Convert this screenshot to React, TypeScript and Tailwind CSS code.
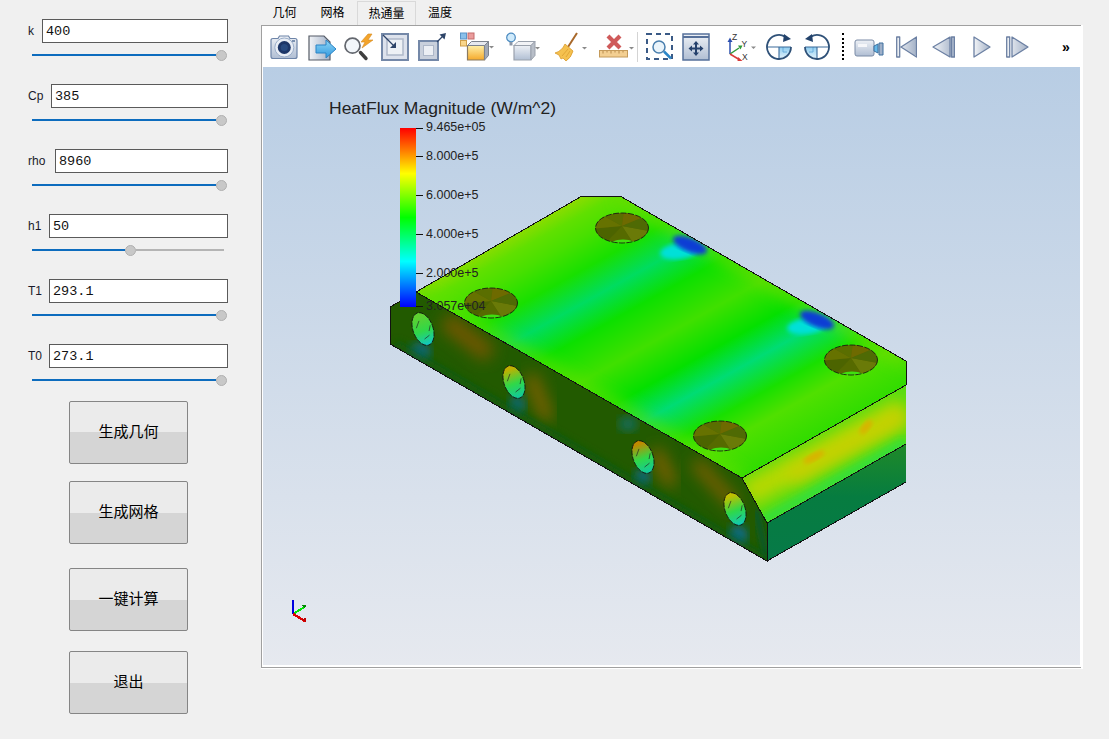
const sans = "font-['Liberation_Sans','Noto_Sans_CJK_SC',sans-serif]";

function Slider({ fill, rest }: { fill: string; rest?: string }) {
  return (
    <div className="mt-[7px] ml-[4px] flex h-[11px] items-start">
      <div className={`mt-[4px] h-[2px] bg-[#0d6cbe] ${fill}`} />
      <div className="h-[11px] w-[11px] shrink-0 rounded-full border border-[#b0b0b0] bg-[#c8c8c8]" />
      {rest && <div className={`mt-[4px] h-[2px] bg-[#b4b4b4] ${rest}`} />}
    </div>
  );
}

function Param({ label, value, inputWidth, fill = "w-[184px]", rest }: { label: string; value: string; inputWidth: string; fill?: string; rest?: string }) {
  return (
    <div className="h-[42px]">
      <div className="flex h-[24px] items-center justify-between">
        <span className="text-[12px] leading-none text-[#1a1a2a]">{label}</span>
        <div className={`flex h-[24px] items-center border border-[#5a5a5a] bg-white pt-[2px] pl-[3px] font-['Liberation_Mono',monospace] text-[13.5px] text-[#111] ${inputWidth}`}>
          {value}
        </div>
      </div>
      <Slider fill={fill} rest={rest} />
    </div>
  );
}

function ActionButton({ label, margin }: { label: string; margin: string }) {
  return (
    <div className={`ml-[41px] flex h-[63px] w-[119px] items-center justify-center rounded-[2px] border border-[#858585] bg-[linear-gradient(#ebebeb_50%,#d5d5d5_50%)] text-[15px] text-black ${margin}`}>
      {label}
    </div>
  );
}

function Caret({ x, y }: { x: number; y: number }) {
  return <path d={`M${x} ${y}h5l-2.5 2.5z`} fill="#8a8a8a" />;
}

function CameraIcon() {
  return (
    <svg width="28" height="30" viewBox="0 0 28 30">
      <defs>
        <linearGradient id="steel" x1="0" y1="0" x2="0" y2="1">
          <stop offset="0" stopColor="#eef1f6" />
          <stop offset="1" stopColor="#b0bed3" />
        </linearGradient>
        <linearGradient id="steelH" x1="0" y1="0" x2="1" y2="0">
          <stop offset="0" stopColor="#f2f4f7" />
          <stop offset="1" stopColor="#a3b1c7" />
        </linearGradient>
        <linearGradient id="gold" x1="0" y1="0" x2="0" y2="1">
          <stop offset="0" stopColor="#fff0a8" />
          <stop offset="1" stopColor="#f5a92a" />
        </linearGradient>
        <linearGradient id="sky" x1="0" y1="0" x2="0" y2="1">
          <stop offset="0" stopColor="#8fd6f5" />
          <stop offset="1" stopColor="#2f97df" />
        </linearGradient>
        <linearGradient id="quad" x1="0" y1="0" x2="0" y2="1">
          <stop offset="0" stopColor="#8fcdf0" />
          <stop offset="1" stopColor="#e4f3fc" />
        </linearGradient>
      </defs>
      <path d="M1 8.5q0-2 2-2h5l1.5-2.5h9l1.5 2.5h5q2 0 2 2v16q0 2-2 2H3q-2 0-2-2z" fill="url(#steel)" stroke="#6d84a8" strokeWidth="1.2" />
      <circle cx="14.3" cy="15.5" r="9.5" fill="#e8edf5" stroke="#9aadc9" />
      <circle cx="14.3" cy="15.5" r="6.5" fill="#1c3567" />
      <circle cx="14.3" cy="15.5" r="3.6" fill="#27497f" />
      <rect x="22" y="8" width="3" height="2" fill="#7d92b1" />
    </svg>
  );
}

function ExportIcon() {
  return (
    <svg width="28" height="30" viewBox="0 0 28 30">
      <path d="M1 4h15l6 6v18H1z" fill="url(#steelH)" stroke="#555b66" strokeWidth="1.2" />
      <path d="M8 13h10V8l10 9-10 9v-5H8z" fill="url(#sky)" stroke="#2a84c6" />
    </svg>
  );
}

function SparkZoomIcon() {
  return (
    <svg width="30" height="30" viewBox="0 0 30 30">
      <path d="M24 2l-7 8h4l-3 6 11-8h-5l4-6z" fill="#f3a42c" stroke="#d58a20" strokeWidth="0.6" />
      <path d="M16.5 20.5l5.5 6" stroke="#3f3f3f" strokeWidth="3.4" strokeLinecap="round" />
      <circle cx="8.5" cy="13.7" r="7.5" fill="#f2f6fa" stroke="#63676e" strokeWidth="1.7" />
    </svg>
  );
}

function FitInIcon() {
  return (
    <svg width="28" height="30" viewBox="0 0 28 30">
      <rect x="1" y="2" width="26" height="26" fill="#dde2ec" stroke="#7488a8" strokeWidth="2" />
      <rect x="6" y="7" width="16" height="16" fill="#eef1f5" stroke="#aeb8c9" strokeWidth="1.5" />
      <path d="M2 3l11 11" stroke="#2e4468" strokeWidth="1.3" />
      <path d="M15 16v-6l-6 6z" fill="#2e4468" />
    </svg>
  );
}

function FitOutIcon() {
  return (
    <svg width="28" height="30" viewBox="0 0 28 30">
      <rect x="1" y="9" width="19" height="19" fill="#c9d0dc" stroke="#7488a8" strokeWidth="2" />
      <rect x="5.5" y="13.5" width="10" height="10" fill="#eceff4" stroke="#aeb8c9" />
      <path d="M19 10l6-6" stroke="#2e4468" strokeWidth="1.3" />
      <path d="M28 1l-6.5 1.5 5 5z" fill="#2e4468" />
    </svg>
  );
}

function ColorCubeIcon() {
  return (
    <svg width="34" height="30" viewBox="0 0 34 30">
      <rect x="0.5" y="1" width="6" height="6" fill="#8ac0ea" stroke="#5a94c8" />
      <rect x="8" y="1" width="6" height="6" fill="#ea9c9c" stroke="#c46a6a" />
      <rect x="0.5" y="8.5" width="6" height="5.5" fill="#f9d68a" stroke="#d0a04a" />
      <path d="M7.5 13.5h17v14.500h-17z" fill="url(#gold)" stroke="#8a7a60" strokeWidth="1.2" />
      <path d="M7.5 13.5l4-4h17l-4 4z" fill="#e6e9ef" stroke="#7c838e" strokeWidth="1" />
      <path d="M24.5 13.5l4-4v14l-4 4.500z" fill="#a0a8b6" stroke="#7c838e" strokeWidth="1" />
      <Caret x={29} y={14} />
    </svg>
  );
}

function BulbCubeIcon() {
  return (
    <svg width="34" height="30" viewBox="0 0 34 30">
      <circle cx="5" cy="5.5" r="4.3" fill="#cfeafb" stroke="#4a8ac0" strokeWidth="1.2" />
      <path d="M3.5 10h3v3.500h-3z" fill="#8a96a8" />
      <path d="M8 13.5h17v14.500h-17z" fill="url(#steel)" stroke="#9aa1ac" strokeWidth="1.2" />
      <path d="M8 13.5l4-4h17l-4 4z" fill="#f2f3f6" stroke="#9aa1ac" strokeWidth="1" />
      <path d="M25 13.5l4-4v14l-4 4.500z" fill="#b8bec8" stroke="#9aa1ac" strokeWidth="1" />
      <Caret x={29} y={15} />
    </svg>
  );
}

function BroomIcon() {
  return (
    <svg width="34" height="30" viewBox="0 0 34 30">
      <path d="M22 1L13 15" stroke="#a8682a" strokeWidth="2" />
      <path d="M10 12L18 19Q16 26 11 29L8 26L6 27L4 23L0 21Q7 19 10 12z" fill="#f5c14f" stroke="#d99a2c" strokeWidth="0.8" />
      <path d="M13 17l-6 7M15 19l-4 6" stroke="#d99a2c" strokeWidth="0.7" />
      <Caret x={27} y={15} />
    </svg>
  );
}

function RulerIcon() {
  return (
    <svg width="35" height="30" viewBox="0 0 35 30">
      <path d="M9 4L21 16M21 4L9 16" stroke="#cf5a5a" strokeWidth="4.2" />
      <rect x="0.5" y="18.5" width="28" height="6.5" fill="#f3cf92" stroke="#c49a5a" />
      <path d="M4 19v2.500M8 19v1.500M12 19v2.500M16 19v1.500M20 19v2.500M24 19v1.500" stroke="#a8793a" strokeWidth="0.8" />
      <Caret x={30} y={15} />
    </svg>
  );
}

function DashZoomIcon() {
  return (
    <svg width="28" height="30" viewBox="0 0 28 30">
      <rect x="1" y="2" width="25" height="25" fill="none" stroke="#3a5a86" strokeWidth="2" strokeDasharray="5 4" />
      <circle cx="13" cy="15" r="6" fill="#eaf4fb" stroke="#4a7fae" strokeWidth="1.5" />
      <path d="M18 19.5l7 7" stroke="#2b86c8" strokeWidth="2.5" />
    </svg>
  );
}

function MoveIcon() {
  return (
    <svg width="28" height="30" viewBox="0 0 28 30">
      <rect x="1" y="2" width="26" height="26" fill="url(#steel)" stroke="#56709a" strokeWidth="1.5" />
      <path d="M1 5h26" stroke="#56709a" strokeWidth="2" />
      <path d="M14 9l-3 3.500h2v3h-3v-2l-3.500 3 3.500 3v-2h3v3h-2l3 3.500 3-3.500h-2v-3h3v2l3.500-3-3.500-3v2h-3v-3h2z" fill="#24406c" />
    </svg>
  );
}

function AxesIcon() {
  return (
    <svg width="30" height="30" viewBox="0 0 30 30">
      <path d="M3 22V9" stroke="#2c4fb0" strokeWidth="1.5" />
      <path d="M0.5 10L3 5.5 5.5 10z" fill="#2c4fb0" />
      <path d="M3 22l9-6" stroke="#2f9a3a" strokeWidth="1.5" />
      <path d="M11 13.5l4.500 0-2 4z" fill="#2f9a3a" />
      <path d="M3 22l10 6" stroke="#d83a3a" strokeWidth="1.5" />
      <path d="M11 25l4.500 4-5 0z" fill="#d83a3a" />
      <text x="5" y="8" className={sans} fontSize="8.5" fill="#333">Z</text>
      <text x="14.5" y="15" className={sans} fontSize="8.5" fill="#333">Y</text>
      <text x="15" y="28" className={sans} fontSize="8.5" fill="#333">X</text>
      <Caret x={24} y={14.5} />
    </svg>
  );
}

function RotateIcon({ flip }: { flip?: boolean }) {
  return (
    <svg width="27" height="30" viewBox="0 0 27 30" className={flip ? "-scale-x-100" : ""}>
      <path d="M13 15h12a12 12 0 0 1-12 12z" fill="url(#quad)" />
      <path d="M17 15v5h4" fill="none" stroke="#5aa3d8" strokeWidth="0.8" />
      <path d="M1 15h24M13 15v12" fill="none" stroke="#3a6a9a" strokeWidth="1.1" />
      <path d="M25 15A12 12 0 1 1 19 4.600" fill="none" stroke="#2f5178" strokeWidth="1.8" />
      <path d="M18 2l7 5-8 3z" fill="#23426b" />
    </svg>
  );
}

function VideoIcon() {
  return (
    <svg width="30" height="30" viewBox="0 0 30 30">
      <rect x="1" y="8" width="19" height="16" rx="2" fill="url(#steel)" stroke="#7a8ba6" />
      <rect x="4" y="12" width="9" height="3" fill="#f6f7fa" />
      <path d="M20 14l4-2v9l-4-2z" fill="#66b8e8" stroke="#3d6f9e" />
      <path d="M25 11h4v12h-4z" fill="#9fb0c9" stroke="#3d6f9e" />
    </svg>
  );
}

function PlayIcon({ shape, width }: { shape: string; width: number }) {
  return (
    <svg width={width} height="30" viewBox={`0 0 ${width} 30`}>
      <path d={shape} fill="url(#steelH)" stroke="#6c80a3" strokeWidth="1.3" strokeLinejoin="round" />
    </svg>
  );
}

const holesTop = [
  [622, 228],
  [491, 303],
  [851, 360],
  [720, 436],
];

const holesSide: [number, number, string, string][] = [
  [423, 329, "#5fd030", "#10c8c8"],
  [514, 382, "#c0b000", "#10c8a0"],
  [643, 457, "#c08a00", "#10c8a0"],
  [735, 509, "#c0c000", "#10c8b8"],
];

const facetColors = ["#6a7a08", "#566a00", "#4c6400", "#667200", "#5a6e00", "#6e6a00", "#4f6a04"];

function TopHole({ x, y, i }: { x: number; y: number; i: number }) {
  const facets = Array.from({ length: 7 }, (_, n) => {
    const a = (n / 7) * Math.PI * 2 + 0.3;
    const b = ((n + 1) / 7) * Math.PI * 2 + 0.3;
    const p = `${x},${y - 2} ${x + 30 * Math.cos(a)},${y - 2 + 18 * Math.sin(a)} ${x + 30 * Math.cos(b)},${y - 2 + 18 * Math.sin(b)}`;
    return <polygon key={n} points={p} fill={facetColors[n]} />;
  });
  return (
    <g>
      <clipPath id={`hole${i}`}>
        <ellipse cx={x} cy={y} rx="26.5" ry="15" />
      </clipPath>
      <g clipPath={`url(#hole${i})`}>
        <ellipse cx={x} cy={y} rx="27" ry="16" fill="#5b6400" />
        {facets}
        <ellipse cx={x + 1} cy={y + 18} rx="15" ry="6.5" fill="#3fe010" />
      </g>
      <ellipse cx={x} cy={y} rx="26.5" ry="15" fill="none" stroke="#111" strokeWidth="0.8" strokeDasharray="6 1.5" />
    </g>
  );
}

function Model() {
  return (
    <g>
      <defs>
        <filter id="blur2"><feGaussianBlur stdDeviation="2" /></filter>
        <filter id="blur5"><feGaussianBlur stdDeviation="5" /></filter>
        <filter id="blur8" x="-50%" y="-50%" width="200%" height="200%"><feGaussianBlur stdDeviation="8" /></filter>
        <clipPath id="topFace"><polygon points="416,292 582,196 620,196 906,361 906,385 742,478" /></clipPath>
        <clipPath id="sideFace"><polygon points="390,307 416,292 742,478 767,523 767,561 390,344" /></clipPath>
        <clipPath id="slantFace"><polygon points="742,478 906,385 906,444 767,523" /></clipPath>
        <linearGradient id="lowFace" x1="0" y1="0" x2="0" y2="1">
          <stop offset="0" stopColor="#1f8a28" />
          <stop offset="0.45" stopColor="#067c40" />
          <stop offset="1" stopColor="#067a48" />
        </linearGradient>
        <linearGradient id="bands" gradientUnits="userSpaceOnUse" x1="582" y1="196" x2="740" y2="479">
          <stop offset="0" stopColor="#8cdc00" />
          <stop offset="0.05" stopColor="#60e000" />
          <stop offset="0.11" stopColor="#48e000" />
          <stop offset="0.2" stopColor="#18e000" />
          <stop offset="0.29" stopColor="#00dc60" />
          <stop offset="0.38" stopColor="#0ce000" />
          <stop offset="0.5" stopColor="#40e000" />
          <stop offset="0.61" stopColor="#04e000" />
          <stop offset="0.7" stopColor="#00dc74" />
          <stop offset="0.8" stopColor="#18e000" />
          <stop offset="0.88" stopColor="#50e000" />
          <stop offset="1" stopColor="#30dc00" />
        </linearGradient>
      </defs>

      <polygon points="767,523 906,444 906,482 767,561" fill="url(#lowFace)" />

      <polygon points="742,478 906,385 906,444 767,523" fill="#58dc10" />
      <g clipPath="url(#slantFace)" fill="none">
        <path d="M745 495L905 410" stroke="#b8d800" strokeWidth="26" filter="url(#blur8)" />
        <path d="M790 478L905 415" stroke="#d0cc00" strokeWidth="12" filter="url(#blur8)" />
        <ellipse cx="814" cy="457" rx="12" ry="4" fill="#d8b400" transform="rotate(-28 814 457)" filter="url(#blur2)" />
        <ellipse cx="866" cy="427" rx="9" ry="4" fill="#d8b400" transform="rotate(-50 866 427)" filter="url(#blur2)" />
        <path d="M760 522L906 442" stroke="#20e050" strokeWidth="7" filter="url(#blur5)" />
      </g>

      <polygon points="416,292 582,196 620,196 906,361 906,385 742,478" fill="url(#bands)" />
      <g clipPath="url(#topFace)" fill="none">
        <path d="M416 292L742 478" stroke="#5ce000" strokeWidth="10" filter="url(#blur8)" />
        <path d="M620 196L906 361" stroke="#70dc00" strokeWidth="10" filter="url(#blur8)" />
        <ellipse cx="680" cy="251" rx="20" ry="8" fill="#00e0d8" transform="rotate(-8 680 251)" filter="url(#blur2)" />
        <ellipse cx="690" cy="245" rx="18" ry="7" fill="#0a3cd4" transform="rotate(22 690 245)" filter="url(#blur2)" />
        <ellipse cx="807" cy="326" rx="20" ry="8" fill="#00e0d8" transform="rotate(-8 807 326)" filter="url(#blur2)" />
        <ellipse cx="817" cy="320" rx="18" ry="7" fill="#0a3cd4" transform="rotate(22 817 320)" filter="url(#blur2)" />
      </g>

      <polygon points="390,307 416,292 742,478 767,523 767,561 390,344" fill="#225a00" />
      <g clipPath="url(#sideFace)" fill="none">
        <path d="M392 310L392 344" stroke="#00604a" strokeWidth="14" filter="url(#blur5)" />
        <path d="M445 320L490 355" stroke="#745600" strokeWidth="18" filter="url(#blur8)" />
        <path d="M530 375L548 420" stroke="#8a6000" strokeWidth="12" filter="url(#blur8)" />
        <path d="M655 450L672 485" stroke="#8a6000" strokeWidth="12" filter="url(#blur8)" />
        <path d="M695 462L735 505" stroke="#825e00" strokeWidth="12" filter="url(#blur8)" />
        <ellipse cx="420" cy="352" rx="11" ry="10" fill="#0a6878" filter="url(#blur5)" />
        <ellipse cx="517" cy="405" rx="9" ry="10" fill="#0a6868" filter="url(#blur5)" />
        <ellipse cx="628" cy="424" rx="10" ry="8" fill="#126a50" filter="url(#blur5)" />
        <ellipse cx="642" cy="478" rx="9" ry="9" fill="#0a6878" filter="url(#blur5)" />
        <ellipse cx="738" cy="536" rx="10" ry="11" fill="#0a6c88" filter="url(#blur5)" />
        <path d="M756 510L766 556" stroke="#0a5a20" strokeWidth="8" filter="url(#blur2)" />
        <path d="M395 345L765 560" stroke="#0a5a18" strokeWidth="8" filter="url(#blur5)" />
      </g>

      {holesTop.map(([x, y], i) => <TopHole key={i} x={x} y={y} i={i} />)}

      {holesSide.map(([x, y, c1, c2], i) => (
        <g key={i} transform={`rotate(-20 ${x} ${y})`}>
          <linearGradient id={`sideHole${i}`} x1="0" y1="0" x2="0" y2="1">
            <stop offset="0.1" stopColor={c1} />
            <stop offset="0.55" stopColor="#30d848" />
            <stop offset="1" stopColor={c2} />
          </linearGradient>
          <ellipse cx={x} cy={y} rx="10" ry="17" fill={`url(#sideHole${i})`} stroke="#111" strokeWidth="0.8" strokeDasharray="5 1" />
          <path d={`M${x - 6} ${y - 3}l5 -6M${x + 5} ${y + 4}l3 -5M${x - 2} ${y + 10}l6 -2`} stroke="#222" strokeWidth="0.6" fill="none" />
        </g>
      ))}

      <g fill="none" stroke="#111" strokeWidth="1" shapeRendering="crispEdges">
        <path d="M416 292L582 196H620L906 361V385L742 478L767 523V561L390 344V307L416 292L742 478" />
        <path d="M742 478L906 385M767 523L906 444M767 561L906 482" />
      </g>
    </g>
  );
}

const ticks: [number, string][] = [
  [156, "8.000e+5"],
  [195, "6.000e+5"],
  [234, "4.000e+5"],
  [273, "2.000e+5"],
];

function ColorBar() {
  return (
    <g className={sans}>
      <defs>
        <linearGradient id="rainbow" x1="0" y1="0" x2="0" y2="1">
          <stop offset="0" stopColor="#ff0000" />
          <stop offset="0.13" stopColor="#ff8000" />
          <stop offset="0.255" stopColor="#ffff00" />
          <stop offset="0.5" stopColor="#00ff00" />
          <stop offset="0.745" stopColor="#00ffff" />
          <stop offset="1" stopColor="#0000ff" />
        </linearGradient>
      </defs>
      <rect x="400" y="128" width="16" height="179" fill="url(#rainbow)" />
      <text x="329" y="114" fontSize="16" fill="#222" textLength="227" lengthAdjust="spacingAndGlyphs">HeatFlux Magnitude (W/m^2)</text>
      <path d="M416 128h7M416 156h7M416 195h7M416 234h7M416 273h7M416 306h7" stroke="#111" strokeWidth="1" shapeRendering="crispEdges" />
      <text x="426" y="131" fontSize="12.5" fill="#222">9.465e+05</text>
      {ticks.map(([y, t]) => (
        <text key={t} x="426" y={y + 4} fontSize="12.5" fill="#222">{t}</text>
      ))}
      <text x="426" y="310" fontSize="12.5" fill="#222">3.057e+04</text>
    </g>
  );
}

function MiniAxes() {
  return (
    <g fill="none" shapeRendering="crispEdges">
      <path d="M293 614V600" stroke="#0000e0" strokeWidth="2.5" />
      <path d="M293 614L306 606" stroke="#00e800" strokeWidth="2" />
      <path d="M293 614L305 621" stroke="#e00000" strokeWidth="2.5" />
      <path d="M302 605l4 0-1 4z" fill="#008a00" />
      <path d="M301 619l5-1v4z" fill="#c00000" />
    </g>
  );
}

function Toolbar() {
  return (
    <div className="flex h-[41px] items-center bg-white pl-[7px]">
      <CameraIcon />
      <div className="ml-[10px]"><ExportIcon /></div>
      <div className="ml-[8px]"><SparkZoomIcon /></div>
      <div className="ml-[7px]"><FitInIcon /></div>
      <div className="ml-[9px]"><FitOutIcon /></div>
      <div className="ml-[14px]"><ColorCubeIcon /></div>
      <div className="ml-[12px]"><BulbCubeIcon /></div>
      <div className="ml-[15px]"><BroomIcon /></div>
      <div className="ml-[10px]"><RulerIcon /></div>
      <div className="ml-[3px] h-[30px] w-px bg-[#d4d4d4]" />
      <div className="ml-[8px]"><DashZoomIcon /></div>
      <div className="ml-[8px]"><MoveIcon /></div>
      <div className="ml-[17px]"><AxesIcon /></div>
      <div className="ml-[9px]"><RotateIcon /></div>
      <div className="ml-[10px]"><RotateIcon flip /></div>
      <div className="ml-[12px] h-[27px] w-[2px] border-l-2 border-dotted border-black" />
      <div className="ml-[10px]"><VideoIcon /></div>
      <div className="ml-[12px]"><PlayIcon width={21} shape="M0.7 5h3v20h-3zM20.5 5v20L5 15z" /></div>
      <div className="ml-[15px]"><PlayIcon width={23} shape="M18 5v20L1 15zM19.5 5h3v20h-3z" /></div>
      <div className="ml-[18px]"><PlayIcon width={18} shape="M1 5v20l16-10z" /></div>
      <div className="ml-[15px]"><PlayIcon width={23} shape="M0.7 5h3v20h-3zM6 5v20l16-10z" /></div>
      <div className="ml-[33px] text-[14px] leading-none font-bold text-black">»</div>
    </div>
  );
}

const tabs = [
  { label: "几何", w: "w-[47px]" },
  { label: "网格", w: "w-[49px]" },
  { label: "热通量", w: "w-[59px]", active: true },
  { label: "温度", w: "w-[48px]" },
];

export default function App() {
  return (
    <div className={`flex h-[739px] w-[1109px] overflow-hidden bg-[#f0f0f0] ${sans}`}>
      <aside className="w-[261px] shrink-0 pt-[19px] pl-[28px]">
        <div className="flex w-[200px] flex-col gap-[23px]">
          <Param label="k" value="400" inputWidth="w-[186px]" />
          <Param label="Cp" value="385" inputWidth="w-[177px]" />
          <Param label="rho" value="8960" inputWidth="w-[173px]" />
          <Param label="h1" value="50" inputWidth="w-[179px]" fill="w-[93px]" rest="w-[88px]" />
          <Param label="T1" value="293.1" inputWidth="w-[179px]" />
          <Param label="T0" value="273.1" inputWidth="w-[179px]" />
        </div>
        <ActionButton label="生成几何" margin="mt-[15px]" />
        <ActionButton label="生成网格" margin="mt-[17px]" />
        <ActionButton label="一键计算" margin="mt-[24px]" />
        <ActionButton label="退出" margin="mt-[20px]" />
      </aside>
      <main className="w-[822px] shrink-0">
        <div className="flex h-[25px] items-end text-[12px] text-black">
          {tabs.map((t) => (
            <div
              key={t.label}
              className={`flex h-[24px] items-center justify-center ${t.w} ${t.active ? "border border-b-0 border-[#d9d9d9] bg-[#f0f0f0]" : ""}`}
            >
              {t.label}
            </div>
          ))}
        </div>
        <div className="h-[644px] border-r-2 border-b border-white">
          <div className="h-[643px] w-[820px] border border-r-0 border-[#a0a0a0] bg-white pl-px">
            <Toolbar />
            <div className="h-[598px] w-[817px] bg-linear-to-b from-[#b8cde4] to-[#e6e9ef]">
              <svg className="block h-full w-full" viewBox="263 67 817 598">
                <Model />
                <ColorBar />
                <MiniAxes />
              </svg>
            </div>
          </div>
        </div>
      </main>
    </div>
  );
}
